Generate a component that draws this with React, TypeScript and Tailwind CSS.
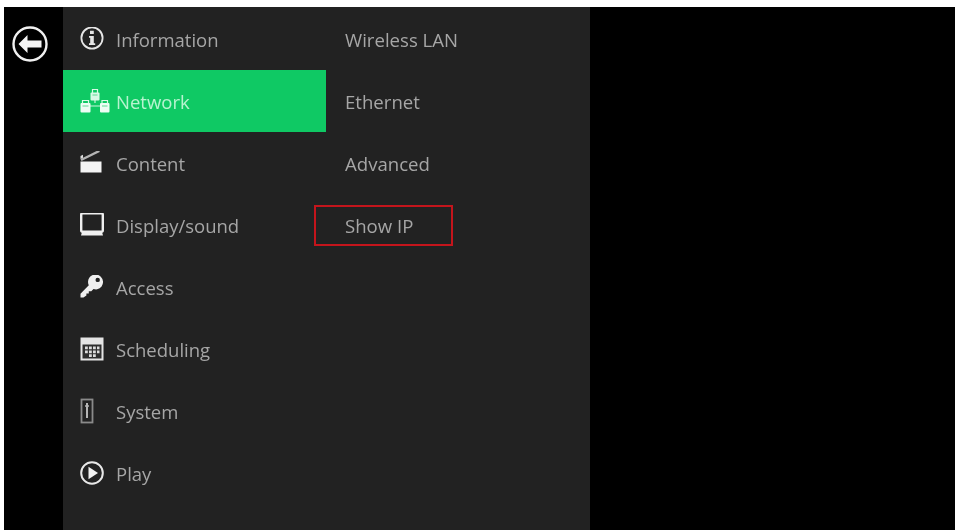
import React from "react";

const F = "#e6e6e6";

const Info = () => (
  <svg viewBox="0 1 24 24" className="w-[24px] h-[24px]" fill="none">
    <circle cx="12" cy="12" r="10.600" stroke={F} strokeWidth="1.800" />
    <path d="M10 4.800h3.800v3.200H10zM9 10h4.800v7.200h1.400v1.800H9v-1.800h1.200v-5.400H9z" fill={F} />
  </svg>
);
const Net = () => (
  <svg viewBox="0 0 30 26" className="w-[30px] h-[26px]" fill="none">
    <path d="M15 12v3M10 18h10" stroke="#c9f5dc" strokeWidth="1.200" />
    <rect x="10.500" y="4.500" width="9" height="8" rx="1" fill="#d9f9e6" />
    <rect x="0.500" y="15" width="10" height="9.500" rx="1" fill="#eefdf5" />
    <rect x="20" y="15" width="9.500" height="9.500" rx="1" fill="#eefdf5" />
    <path d="M12.500 5V1.500h5V5M2.500 15.500V12.500h6v3M22 15.500V12.500h5.500v3" stroke="#d9f9e6" strokeWidth="1.200" />
    <path d="M2.500 18h6M22 18h5.500M12.500 7h5" stroke="#5fd994" strokeWidth="1" />
  </svg>
);
const Clapper = () => (
  <svg viewBox="0 2 22 24" className="w-[22px] h-[24px]">
    <path d="M0.500 12.500h21v11H0.500z" fill="#f4f4f4" />
    <path d="M0.500 10 19 0.800l.8 2.200L1.500 12z" fill="#b5b5b5" />
    <path d="M0.500 7 3 5.800v3l-2.500 1.200z" fill="#dddddd" />
  </svg>
);
const Monitor = () => (
  <svg viewBox="0 1 24 24" className="w-[24px] h-[24px]" fill="none">
    <rect x="1.200" y="1.200" width="21.600" height="18.600" rx="1.500" stroke="#efefef" strokeWidth="2.400" />
    <path d="M2 20h20l1 3.500H1z" fill="#efefef" />
  </svg>
);
const Key = () => (
  <svg viewBox="0 1 24 24" className="w-[24px] h-[24px]">
    <path
      fillRule="evenodd"
      d="M16 .5a7.500 7.500 0 0 1 1.200 14.800 7 7 0 0 1-3.700-.4l-2.200 2.300H8.800v2.300H6.400v2L3.500 23.500H.5v-3.800l8.300-8.400A7.500 7.500 0 0 1 16 .5zm1.700 3.200a2.200 2.200 0 1 0 0 4.400 2.200 2.200 0 0 0 0-4.400z"
      fill="#efefef"
    />
  </svg>
);
const Calendar = () => (
  <svg viewBox="0 0 24 24" className="w-[24px] h-[24px]">
    <path d="M.5.5h23v23H.5z" fill="#e4e4e4" />
    <path d="M2.500 7.500h19v14h-19z" fill="#2e2e2e" />
    <path
      d="M5 9.500h2.800v2.800H5zM9 9.500h2.800v2.800H9zM13 9.500h2.800v2.800H13zM17 9.500h2.500v2.800H17zM5 13.500h2.800v2.800H5zM9 13.500h2.800v2.800H9zM13 13.500h2.800v2.800H13zM17 13.500h2.500v2.800H17zM9 17.300h2.800V20H9zM13 17.300h2.800V20H13z"
      fill="#dcdcdc"
    />
  </svg>
);
const SystemIcon = () => (
  <svg viewBox="0 0 14 26" className="w-[14px] h-[26px]" fill="none">
    <rect x="1.500" y="1.500" width="11" height="23" stroke="#8a8a8a" strokeWidth="1.800" />
    <path d="M7 5v15" stroke="#b5b5b5" strokeWidth="2" />
    <path d="M5 8h4" stroke="#b5b5b5" strokeWidth="1.500" />
  </svg>
);
const Play = () => (
  <svg viewBox="0 0 24 24" className="w-[24px] h-[24px]" fill="none">
    <circle cx="12" cy="12" r="10.800" stroke="#e8e8e8" strokeWidth="2" />
    <path d="M8.500 5.800 18 12l-9.500 6.200z" fill="#f2f2f2" />
  </svg>
);
const Back = () => (
  <svg viewBox="0 0 36 36" className="w-[36px] h-[36px]" fill="none">
    <circle cx="18" cy="18" r="16.500" stroke="#f0f0f0" strokeWidth="2.400" />
    <path d="M15.500 9 6.500 18l9 9v-5.500h14v-7h-14z" fill="#f4f4f4" />
  </svg>
);

const menu: { label: string; icon: React.ReactNode; active?: boolean }[] = [
  { label: "Information", icon: <Info /> },
  { label: "Network", icon: <Net />, active: true },
  { label: "Content", icon: <Clapper /> },
  { label: "Display/sound", icon: <Monitor /> },
  { label: "Access", icon: <Key /> },
  { label: "Scheduling", icon: <Calendar /> },
  { label: "System", icon: <SystemIcon /> },
  { label: "Play", icon: <Play /> },
];

const sub = ["Wireless LAN", "Ethernet", "Advanced", "Show IP"];

export default function App() {
  return (
    <div
      className="w-[957px] h-[532px] bg-white pt-[7px] pl-[4px] pr-[2px] pb-[2px]"
      style={{ fontFamily: '"Open Sans", sans-serif' }}
    >
      <div className="flex w-full h-full bg-black">
        <div className="w-[59px] flex pl-[8px] pt-[19px] shrink-0">
          <div className="blur-[0.5px] h-[36px]">
            <Back />
          </div>
        </div>
        <div className="w-[527px] h-full bg-[#222222] flex pt-px">
          <div className="w-[263px] shrink-0">
            {menu.map((m) => (
              <div
                key={m.label}
                className={
                  m.active
                    ? "h-[62px] flex items-center bg-[#0fc964] text-[#b8f3d0]"
                    : "h-[62px] flex items-center text-[#a6a6a6]"
                }
              >
                <div className="w-[53px] shrink-0 flex justify-start pl-[17px] blur-[0.5px]">
                  {m.icon}
                </div>
                <span className="text-[18.500px] leading-none pt-[2px] blur-[0.6px]">{m.label}</span>
              </div>
            ))}
          </div>
          <div className="flex-1 pl-[19px]">
            {sub.map((s) => (
              <div key={s} className="h-[62px] flex items-center text-[#a6a6a6] relative">
                <span className="text-[18.600px] leading-none pt-[2px] blur-[0.6px]">{s}</span>
                {s === "Show IP" && (
                  <div className="absolute left-[-31px] top-[11px] w-[139px] h-[41px] border-2 border-[#c4151c]" />
                )}
              </div>
            ))}
          </div>
        </div>
      </div>
    </div>
  );
}
